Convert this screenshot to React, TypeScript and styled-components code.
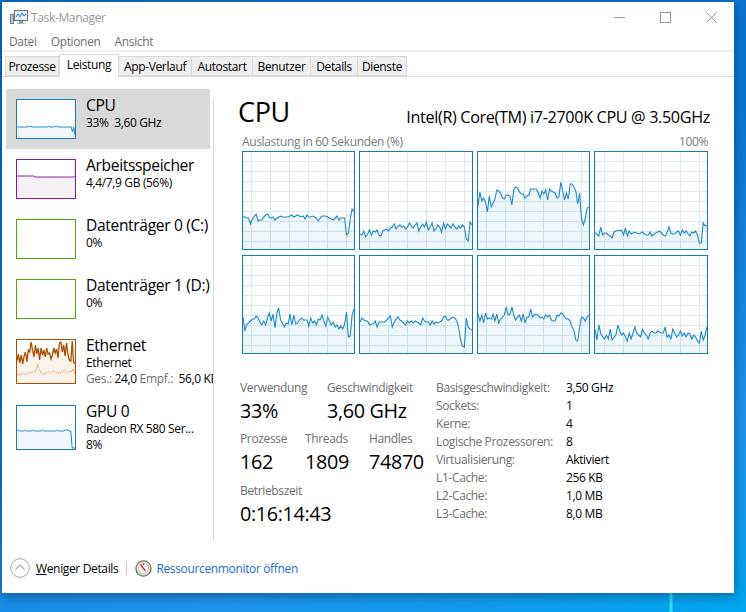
import React from 'react';
import styled, { createGlobalStyle } from 'styled-components';

const GlobalStyle = createGlobalStyle`
  html, body {
    margin: 0;
    padding: 0;
    overflow: hidden;
  }
  body {
    font-family: "Open Sans", "Noto Sans", sans-serif;
    font-size: 12px;
    letter-spacing: -0.35px;
    color: #000;
  }
`;

const Desktop = styled.div`
  box-sizing: border-box;
  width: 746px;
  height: 612px;
  padding: 2px 12px 19px 2px;
  background:
    linear-gradient(90deg, transparent 669px, #2fe0f0 670px, #2fe0f0 672px, transparent 673px) bottom / 100% 19px no-repeat,
    linear-gradient(160deg, #0a6fc4 0%, #0c78d4 45%, #1f93ea 78%, #00a6ee 100%);
`;

const Window = styled.div`
  display: flex;
  flex-direction: column;
  height: 100%;
  background: #fff;
  box-shadow: 0 2px 12px rgba(0, 20, 50, 0.45);
`;

const TitleBar = styled.div`
  display: flex;
  align-items: center;
  height: 30px;
  padding-left: 8px;
  color: #999;
`;

const TitleText = styled.span`
  margin-left: 3px;
`;

const WinButtons = styled.div`
  display: flex;
  margin-left: auto;
`;

const WinButton = styled.div`
  display: flex;
  align-items: center;
  justify-content: center;
  width: 46px;
  height: 30px;
`;

const MenuBar = styled.div`
  display: flex;
  gap: 14px;
  align-items: center;
  height: 18px;
  padding-left: 7px;
  border-bottom: 2px solid #f0f0f0;
  color: #6e6e6e;
`;

const TabBar = styled.div`
  display: flex;
  align-items: flex-end;
  height: 25px;
  padding-left: 3px;
  border-bottom: 1px solid #d9d9d9;
  box-sizing: border-box;
`;

const Tab = styled.div<{ $active?: boolean; $w: number }>`
  box-sizing: border-box;
  display: flex;
  align-items: center;
  justify-content: center;
  width: ${(p) => p.$w}px;
  height: ${(p) => (p.$active ? 23 : 20)}px;
  margin-bottom: ${(p) => (p.$active ? -1 : 0)}px;
  padding-bottom: ${(p) => (p.$active ? 3 : 0)}px;
  background: ${(p) => (p.$active ? '#fff' : '#f0f0f0')};
  border: 1px solid #d9d9d9;
  border-left-width: ${(p) => (p.$active ? 1 : 0)}px;
  border-bottom-width: ${(p) => (p.$active ? 0 : 1)}px;
  &:first-child {
    border-left-width: 1px;
  }
`;

const Body = styled.div`
  display: flex;
  flex: 1;
  min-height: 0;
  padding-top: 12px;
`;

const Sidebar = styled.div`
  flex: none;
  width: 204px;
  margin-left: 4px;
`;

const SideItem = styled.div<{ $selected?: boolean; $tall?: boolean }>`
  display: flex;
  box-sizing: border-box;
  height: ${(p) => (p.$tall ? 66 : 60)}px;
  padding: 10px 0 0 10px;
  background: ${(p) => (p.$selected ? '#d9d9d9' : 'transparent')};
  white-space: nowrap;
`;

const Thumb = styled.div<{ $color: string; $tall?: boolean }>`
  flex: none;
  box-sizing: border-box;
  width: 60px;
  height: ${(p) => (p.$tall ? 45 : 40)}px;
  border: 1px solid ${(p) => p.$color};
  background: #fff;
  svg {
    display: block;
    width: 100%;
    height: 100%;
  }
`;

const ItemText = styled.div`
  margin: -4px 0 0 10px;
  line-height: 16px;
`;

const ItemName = styled.div`
  font-size: 15.6px;
  line-height: 20px;
`;

const ClippedRow = styled.div`
  width: 127px;
  overflow: hidden;
`;

const Dim = styled.span`
  color: #6e6e6e;
`;

const Main = styled.div`
  flex: 1;
  height: 442px;
  margin: 10px 0 0 3px;
  padding-left: 24px;
  border-left: 1px solid #d9d9d9;
`;

const Header = styled.div`
  display: flex;
  align-items: flex-end;
  justify-content: space-between;
  width: 472px;
  height: 30px;
  margin-top: -2px;
`;

const BigTitle = styled.div`
  font-size: 27px;
  line-height: 30px;
`;

const CpuName = styled.div`
  font-size: 16.2px;
  line-height: 20px;
`;

const Caption = styled.div`
  display: flex;
  justify-content: space-between;
  width: 466px;
  margin: 7px 0 0 4px;
  line-height: 16px;
  color: #7a7a7a;
`;

const GraphGrid = styled.div`
  display: grid;
  grid-template-columns: 113px 114px 113px 114px;
  grid-auto-rows: 99px;
  gap: 5px 4px;
  margin: 1px 0 0 4px;
`;

const GraphBox = styled.div`
  box-sizing: border-box;
  border: 1px solid #117dbb;
  svg {
    display: block;
    width: 100%;
    height: 100%;
  }
`;

const Details = styled.div`
  display: flex;
  margin: 26px 0 0 2px;
`;

const Stats = styled.div`
  width: 196px;
`;

const StatRow = styled.div<{ $h: number }>`
  display: flex;
  height: ${(p) => p.$h}px;
`;

const Stat = styled.div<{ $w: number }>`
  width: ${(p) => p.$w}px;
  white-space: nowrap;
`;

const StatLabel = styled.div`
  line-height: 16px;
  color: #6e6e6e;
`;

const StatValue = styled.div`
  margin-top: 2px;
  font-size: 19.8px;
  line-height: 26px;
`;

const InfoTable = styled.div`
  display: grid;
  grid-template-columns: 130px auto;
  grid-auto-rows: 18px;
  align-items: center;
  align-content: start;
  margin-top: -2px;
`;

const Footer = styled.div`
  display: flex;
  align-items: center;
  height: 50px;
  padding-left: 8px;
`;

const LessDetails = styled.span`
  margin-left: 6px;
`;

const FooterDivider = styled.div`
  width: 1px;
  height: 14px;
  margin: 0 8px;
  background: #c8c8c8;
`;

const MonitorLink = styled.span`
  margin-left: 4px;
  color: #1a6cd0;
`;

const BLUE = '#1f8ac6';

const core1 = [66,66,67,67,73,68,65,63,70,69,69,66,64,63,66,67,66,69,67,66,65,66,66,66,66,65,64,66,65,64,65,66,65,68,64,66,66,65,66,67,70,67,65,65,65,66,67,68,69,67,65,69,67,67,67,84,82,68,58,60];
const core2 = [83,84,80,86,83,79,84,80,81,79,84,85,80,79,78,80,77,76,73,78,75,74,76,75,78,76,72,75,77,74,72,80,76,73,76,71,79,76,72,80,78,74,76,81,72,78,73,75,77,73,76,78,75,77,74,76,88,90,71,74];
const core3 = [55,41,50,47,51,61,45,56,52,48,39,40,42,47,48,44,44,45,54,39,36,37,41,43,43,47,45,44,38,38,38,38,42,47,40,43,39,49,38,40,41,42,47,46,31,40,49,42,48,33,33,36,40,53,42,68,74,68,57,56];
const core4 = [82,83,85,76,84,82,82,84,85,87,81,80,79,80,79,84,77,85,80,83,82,81,82,83,82,81,83,84,84,81,85,83,82,81,80,82,84,85,81,76,82,83,83,81,80,84,79,82,80,83,85,81,82,80,84,92,92,72,75,74];
const core5 = [62,76,69,68,66,64,64,61,63,67,70,66,70,63,58,66,59,73,58,53,65,68,72,68,69,59,70,60,69,68,65,63,65,65,65,71,63,68,66,70,64,65,60,66,71,62,66,70,67,72,70,74,71,74,69,57,82,81,60,54];
const core6 = [67,63,65,66,66,70,69,69,66,72,67,67,67,67,65,63,61,72,67,64,62,65,66,68,70,66,68,66,68,66,67,68,70,63,66,67,67,70,66,69,67,68,67,66,62,61,65,65,63,62,63,66,72,85,91,92,63,72,74,75];
const core7 = [59,66,60,68,58,64,63,64,59,66,59,68,64,62,60,52,60,59,52,60,65,62,60,66,59,68,62,62,54,62,60,59,60,63,62,64,60,62,60,65,66,66,60,61,58,59,62,64,64,66,72,75,85,86,72,62,63,66,62,60];
const core8 = [74,85,70,78,82,84,80,84,74,85,82,80,70,76,80,78,82,86,78,84,78,72,78,80,82,74,78,80,84,78,76,78,78,76,77,78,78,72,82,80,84,74,78,82,80,76,81,78,82,78,79,84,80,82,86,88,76,85,80,72];

const coreData = [core1, core2, core3, core4, core5, core6, core7, core8];
const hLines = [10, 20, 30, 40, 50, 60, 70, 80, 90];

const toLine = (values: number[], w: number) =>
  values.map((y, i) => `${((i * w) / (values.length - 1)).toFixed(1)},${y}`).join(' ');

// even columns are one pixel wider in the reference, their grid sits one pixel further right
const CoreGraph = ({ values, wide }: { values: number[]; wide: boolean }) => {
  const w = wide ? 112 : 111;
  const shifted = toLine(values.map((v) => v - 1), w);
  return (
    <GraphBox>
      <svg viewBox={`0 0 ${w} 97`} preserveAspectRatio="none">
        {[8, 27, 46, 65, 84, 103].map((x) => (
          <line key={x} x1={x + (wide ? 1.5 : 0.5)} x2={x + (wide ? 1.5 : 0.5)} y1="0" y2="97" stroke="#d9eaf4" />
        ))}
        {hLines.map((y) => (
          <line key={y} x1="0" x2={w} y1={y - 0.5} y2={y - 0.5} stroke="#d9eaf4" />
        ))}
        <polygon points={`0,97 ${shifted} ${w},97`} fill="#117dbb" fillOpacity="0.065" />
        <polyline points={shifted} fill="none" stroke={BLUE} strokeWidth="1.1" />
      </svg>
    </GraphBox>
  );
};

const ThumbLine = ({ values, color, fill, h }: { values: number[]; color: string; fill: string; h: number }) => (
  <svg viewBox={`0 0 58 ${h}`} preserveAspectRatio="none">
    <polygon points={`0,${h} ${toLine(values, 58)} 58,${h}`} fill={fill} />
    <polyline points={toLine(values, 58)} fill="none" stroke={color} strokeWidth="1" />
  </svg>
);

const cpuThumb = [27,27,27,27,27,27,27,27,27,26,27,26,27,27,27,27,27,27,27,27,27,27,27,27,27,26,27,27,27,27,26,27,26,27,27,27,27,27,27,27,27,27,27,27,32,27,35];
const memThumb = [16,16,16,16,16,16,16,16,16,16,16,16,17,17,17,17,17,17,17,17,17,17,17,17,17,17,17,17,17,17,17,17,17,17,17,17,17,17,16];
const gpuThumb = [24,24,25,25,25,25,24,25,25,25,25,24,25,25,25,25,25,25,24,25,25,25,25,25,25,25,25,25,24,25,25,25,25,25,24,24,24,25,25,42,42,42];
const netThumb = [21,14,23,15,24,16,12,22,10,12,2,10,17,5,14,8,20,8,15,10,17,8,14,13,19,15,8,13,9,18,3,2,12,5,16,3,14,20,21,1,22,24];
const netDots = [34,35,35,33,34,34,34,32,33,31,32,24,30,33,34,34,32,32,33,31,31,33,33,33,33,30,32,33,31,32,29,34];

const EthernetThumb = () => (
  <svg viewBox="0 0 58 43" preserveAspectRatio="none">
    <polygon points={`0,43 ${toLine(netThumb, 58)} 58,43`} fill="#fcf3eb" />
    <polyline points={toLine(netDots, 58)} fill="none" stroke="#e57a3a" strokeWidth="1" strokeDasharray="1 1" />
    <polyline points={toLine(netThumb, 58)} fill="none" stroke="#a74f01" strokeWidth="1.3" />
  </svg>
);

const AppIcon = () => (
  <svg width="18" height="16" viewBox="0 0 18 16">
    <rect x="0.5" y="5.5" width="3" height="9" fill="#b9c2c6" stroke="#76858b" />
    <rect x="4.5" y="1.5" width="13" height="10" fill="#e9f3f9" stroke="#61757f" />
    <polyline points="6,8 8,5 10,8 12,4 14,7 16,5" fill="none" stroke="#1f7fb8" />
    <rect x="9" y="12" width="4" height="2" fill="#8d9ba1" />
    <rect x="7" y="14" width="8" height="1" fill="#a9b4b9" />
  </svg>
);

const ResMonIcon = () => (
  <svg width="17" height="17" viewBox="0 0 17 17">
    <circle cx="8.5" cy="8.5" r="7.6" fill="#e9e6df" stroke="#77746c" strokeWidth="1.3" />
    <circle cx="8.5" cy="8.5" r="5.2" fill="#fff" stroke="#a8a59e" strokeWidth="0.7" />
    <line x1="5.5" y1="4.5" x2="10.5" y2="11" stroke="#d8342a" strokeWidth="1.5" />
    <line x1="8.5" y1="3.6" x2="8.5" y2="5" stroke="#2b5f9e" />
  </svg>
);

const tabs = [
  { label: 'Prozesse', w: 54 },
  { label: 'Leistung', w: 60, active: true },
  { label: 'App-Verlauf', w: 73 },
  { label: 'Autostart', w: 61 },
  { label: 'Benutzer', w: 58 },
  { label: 'Details', w: 47 },
  { label: 'Dienste', w: 49 },
];

const info = [
  ['Basisgeschwindigkeit:', '3,50 GHz'],
  ['Sockets:', '1'],
  ['Kerne:', '4'],
  ['Logische Prozessoren:', '8'],
  ['Virtualisierung:', 'Aktiviert'],
  ['L1-Cache:', '256 KB'],
  ['L2-Cache:', '1,0 MB'],
  ['L3-Cache:', '8,0 MB'],
];

const App = () => (
  <Desktop>
    <GlobalStyle />
    <Window>
      <TitleBar>
        <AppIcon />
        <TitleText>Task-Manager</TitleText>
        <WinButtons>
          <WinButton>
            <svg width="11" height="11"><line x1="0" x2="11" y1="5.5" y2="5.5" stroke="#9a9a9a" /></svg>
          </WinButton>
          <WinButton>
            <svg width="11" height="11"><rect x="0.5" y="0.5" width="10" height="10" fill="none" stroke="#9a9a9a" /></svg>
          </WinButton>
          <WinButton>
            <svg width="11" height="11"><path d="M0.5 0.5 L10.5 10.5 M10.5 0.5 L0.5 10.5" stroke="#9a9a9a" /></svg>
          </WinButton>
        </WinButtons>
      </TitleBar>
      <MenuBar>
        <span>Datei</span>
        <span>Optionen</span>
        <span>Ansicht</span>
      </MenuBar>
      <TabBar>
        {tabs.map((t) => (
          <Tab key={t.label} $w={t.w} $active={t.active}>{t.label}</Tab>
        ))}
      </TabBar>
      <Body>
        <Sidebar>
          <SideItem $selected>
            <Thumb $color="#117dbb"><ThumbLine values={cpuThumb} color={BLUE} fill="#f0f6fa" h={38} /></Thumb>
            <ItemText>
              <ItemName>CPU</ItemName>
              33%&nbsp; 3,60 GHz
            </ItemText>
          </SideItem>
          <SideItem>
            <Thumb $color="#8b12ae"><ThumbLine values={memThumb} color="#8b12ae" fill="#f4f2f4" h={38} /></Thumb>
            <ItemText>
              <ItemName>Arbeitsspeicher</ItemName>
              4,4/7,9 GB (56%)
            </ItemText>
          </SideItem>
          <SideItem>
            <Thumb $color="#4da60c" />
            <ItemText>
              <ItemName>Datenträger 0 (C:)</ItemName>
              0%
            </ItemText>
          </SideItem>
          <SideItem>
            <Thumb $color="#4da60c" />
            <ItemText>
              <ItemName>Datenträger 1 (D:)</ItemName>
              0%
            </ItemText>
          </SideItem>
          <SideItem $tall>
            <Thumb $color="#a74f01" $tall><EthernetThumb /></Thumb>
            <ItemText>
              <ItemName>Ethernet</ItemName>
              <div>Ethernet</div>
              <ClippedRow><Dim>Ges.:</Dim> 24,0 <Dim>Empf.:</Dim>&nbsp; 56,0 KBit/s</ClippedRow>
            </ItemText>
          </SideItem>
          <SideItem $tall>
            <Thumb $color="#117dbb" $tall><ThumbLine values={gpuThumb} color={BLUE} fill="#f0f6fa" h={43} /></Thumb>
            <ItemText>
              <ItemName>GPU 0</ItemName>
              <div>Radeon RX 580 Ser...</div>
              <div>8%</div>
            </ItemText>
          </SideItem>
        </Sidebar>
        <Main>
          <Header>
            <BigTitle>CPU</BigTitle>
            <CpuName>Intel(R) Core(TM) i7-2700K CPU @ 3.50GHz</CpuName>
          </Header>
          <Caption>
            <span>Auslastung in 60 Sekunden (%)</span>
            <span>100%</span>
          </Caption>
          <GraphGrid>
            {coreData.map((values, i) => (
              <CoreGraph key={i} values={values} wide={i % 2 === 1} />
            ))}
          </GraphGrid>
          <Details>
            <Stats>
              <StatRow $h={51}>
                <Stat $w={87}>
                  <StatLabel>Verwendung</StatLabel>
                  <StatValue>33%</StatValue>
                </Stat>
                <Stat $w={100}>
                  <StatLabel>Geschwindigkeit</StatLabel>
                  <StatValue>3,60 GHz</StatValue>
                </Stat>
              </StatRow>
              <StatRow $h={52}>
                <Stat $w={65}>
                  <StatLabel>Prozesse</StatLabel>
                  <StatValue>162</StatValue>
                </Stat>
                <Stat $w={64}>
                  <StatLabel>Threads</StatLabel>
                  <StatValue>1809</StatValue>
                </Stat>
                <Stat $w={60}>
                  <StatLabel>Handles</StatLabel>
                  <StatValue>74870</StatValue>
                </Stat>
              </StatRow>
              <StatRow $h={44}>
                <Stat $w={120}>
                  <StatLabel>Betriebszeit</StatLabel>
                  <StatValue>0:16:14:43</StatValue>
                </Stat>
              </StatRow>
            </Stats>
            <InfoTable>
              {info.map(([k, v]) => (
                <React.Fragment key={k}>
                  <Dim>{k}</Dim>
                  <span>{v}</span>
                </React.Fragment>
              ))}
            </InfoTable>
          </Details>
        </Main>
      </Body>
      <Footer>
        <svg width="20" height="20" viewBox="0 0 20 20">
          <circle cx="10" cy="10" r="9.3" fill="#fff" stroke="#a6a6a6" />
          <polyline points="5.5,11.5 10,7 14.5,11.5" fill="none" stroke="#a6a6a6" strokeWidth="1.2" />
        </svg>
        <LessDetails><u>W</u>eniger Details</LessDetails>
        <FooterDivider />
        <ResMonIcon />
        <MonitorLink>Ressourcenmonitor öffnen</MonitorLink>
      </Footer>
    </Window>
  </Desktop>
);

export default App;
